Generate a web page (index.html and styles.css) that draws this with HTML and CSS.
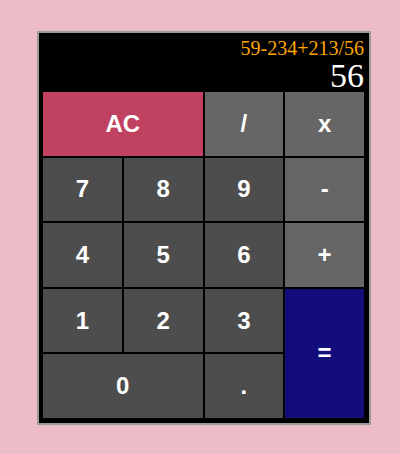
FILE: index.html
```
<!DOCTYPE html>
<html>
<head>
<meta charset="utf-8">
<link rel="stylesheet" href="styles.css">
</head>
<body>
<div class="calc">
  <div class="display">
    <div class="expr">59-234+213/56</div>
    <div class="result">56</div>
  </div>
  <div class="keys">
    <button class="key clear span2">AC</button>
    <button class="key op">/</button>
    <button class="key op">x</button>
    <button class="key">7</button>
    <button class="key">8</button>
    <button class="key">9</button>
    <button class="key op">-</button>
    <button class="key">4</button>
    <button class="key">5</button>
    <button class="key">6</button>
    <button class="key op">+</button>
    <button class="key">1</button>
    <button class="key">2</button>
    <button class="key">3</button>
    <button class="key equals">=</button>
    <button class="key span2">0</button>
    <button class="key">.</button>
  </div>
</div>
</body>
</html>
```
FILE: styles.css
```
html, body {
  margin: 0;
  padding: 0;
}
body {
  background: #ecbdc6;
  width: 400px;
  height: 454px;
  padding: 31px 0 0 37px;
  box-sizing: border-box;
}
.calc {
  width: 330px;
  height: 390px;
  border: 2px solid #9a9a9a;
  background: #000;
  padding: 0 5px 5px 4px;
  box-sizing: content-box;
  display: flex;
  flex-direction: column;
}
.calc {
  box-sizing: border-box;
  width: 334px;
  height: 394px;
}
.display {
  height: 59px;
  padding-top: 4px;
  box-sizing: border-box;
  text-align: right;
  font-family: "Liberation Serif", "Times New Roman", serif;
}
.expr {
  color: #ffa500;
  font-size: 20px;
  line-height: 22px;
}
.result {
  color: #fff;
  font-size: 34px;
  line-height: 33px;
}
.keys {
  flex: 1;
  display: grid;
  grid-template-columns: repeat(4, 1fr);
  grid-template-rows: repeat(5, 1fr);
  gap: 2px;
}
.key {
  border: 0;
  margin: 0;
  padding: 0;
  background: #4d4d4d;
  color: #fff;
  font-family: "Liberation Sans", Arial, sans-serif;
  font-weight: bold;
  font-size: 24px;
  display: flex;
  align-items: center;
  justify-content: center;
}
.span2 {
  grid-column: span 2;
}
.clear {
  background: #c04160;
}
.op {
  background: #666666;
}
.equals {
  background: #130c7b;
  grid-row: span 2;
}
```
